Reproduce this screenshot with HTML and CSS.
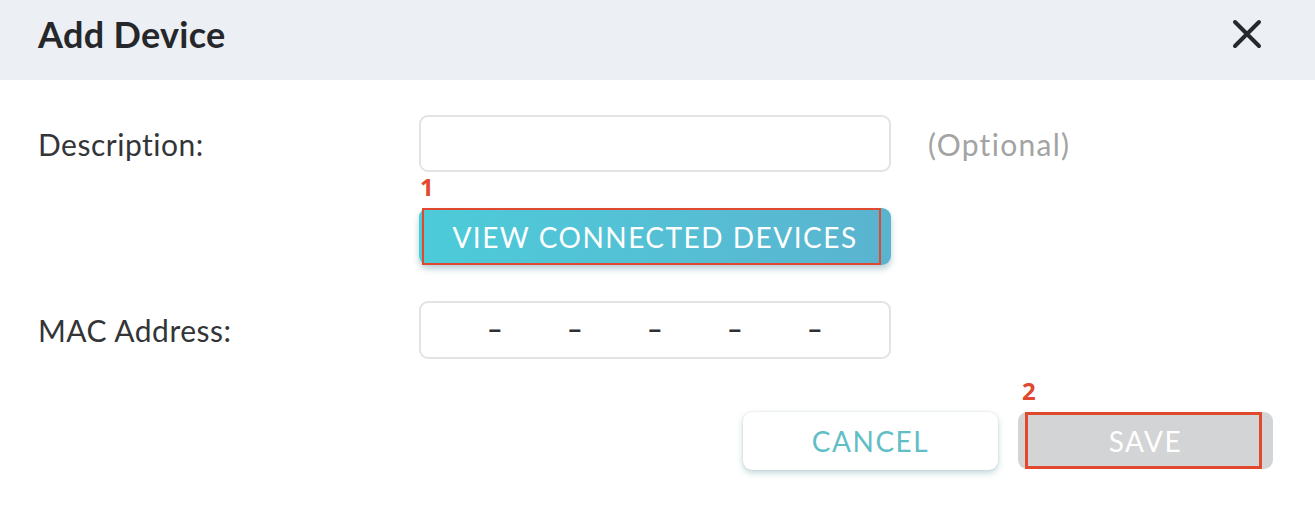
FILE: index.html
```html
<!DOCTYPE html>
<html lang="en">
<head>
<meta charset="utf-8">
<title>Add Device</title>
<link rel="stylesheet" href="styles.css">
</head>
<body>
<div class="dialog">
  <header class="dialog-header">
    <h1 class="dialog-title">Add Device</h1>
    <button class="close-btn" aria-label="Close">
      <svg width="30" height="30" viewBox="0 0 30 30"><path d="M3 3 L27 27 M27 3 L3 27" stroke="#26282b" stroke-width="4" stroke-linecap="round" fill="none"/></svg>
    </button>
  </header>
  <main class="dialog-body">
    <div class="form-grid">
      <label class="field-label">Description:</label>
      <div class="text-input"></div>
      <span class="hint">(Optional)</span>

      <div></div>
      <div class="annotated">
        <span class="mark mark-1">1</span>
        <button class="btn btn-primary">VIEW CONNECTED DEVICES</button>
        <span class="outline outline-1"></span>
      </div>
      <div></div>

      <label class="field-label">MAC Address:</label>
      <div class="text-input mac-input">
        <span>–</span><span>–</span><span>–</span><span>–</span><span>–</span>
      </div>
      <div></div>
    </div>
    <div class="dialog-footer">
      <button class="btn btn-cancel">CANCEL</button>
      <div class="annotated">
        <span class="mark mark-2">2</span>
        <button class="btn btn-save">SAVE</button>
        <span class="outline outline-2"></span>
      </div>
    </div>
  </main>
</div>
</body>
</html>
```

FILE: styles.css
```css
* { box-sizing: border-box; }
html, body { margin: 0; padding: 0; background: #ffffff; }
body { font-family: Lato, "Noto Sans", sans-serif; color: #333538; }

.dialog { width: 1315px; height: 531px; overflow: hidden; }

.dialog-header {
  height: 80px;
  background: #eceff3;
  display: flex;
  align-items: center;
  justify-content: space-between;
  padding: 0 53px 13px 38px;
}
.dialog-title {
  margin: 0;
  font-size: 36px;
  font-weight: 700;
  color: #25272a;
  letter-spacing: 0.3px;
}
.close-btn {
  border: 0;
  background: none;
  padding: 0;
  width: 30px;
  height: 30px;
  display: flex;
}

.dialog-body { padding: 35px 42px 0 38px; }

.form-grid {
  display: grid;
  grid-template-columns: 381px 472px auto;
  row-gap: 36px;
  align-items: center;
}
.field-label {
  font-size: 30px;
  color: #333538;
  letter-spacing: 0.5px;
}
.text-input {
  height: 57px;
  border: 2px solid #e3e3e3;
  border-radius: 9px;
  background: #fff;
}
.hint {
  margin-left: 37px;
  font-size: 30px;
  color: #a3a3a3;
  letter-spacing: 1.3px;
}
.mac-input {
  height: 58px;
  display: flex;
  align-items: center;
  padding-left: 66px;
  padding-bottom: 3px;
  font-size: 27px;
  font-weight: 900;
  color: #2e3033;
}
.mac-input span { width: 80px; }

.annotated { position: relative; }
.mark {
  position: absolute;
  font-family: "Open Sans", "Noto Sans", sans-serif;
  font-weight: 700;
  font-size: 24px;
  line-height: 1;
  color: #e0492e;
}
.mark-1 { left: 1px; top: -33px; }
.mark-2 { left: 4px; top: -33px; }
.outline {
  position: absolute;
  border: 2px solid #e0492e;
  pointer-events: none;
}
.outline-1 { left: 3px; right: 10px; top: 0; bottom: 0; }
.outline-2 { left: 7px; right: 11px; top: 0; bottom: 1px; border-width: 3px; }

.btn {
  display: block;
  border: 0;
  font-family: Lato, "Noto Sans", sans-serif;
  font-size: 28px;
  letter-spacing: 1.5px;
  border-radius: 9px;
  cursor: pointer;
}
.btn-primary {
  width: 472px;
  height: 57px;
  color: #ffffff;
  background: linear-gradient(90deg, #4ccbd9 0%, #56bed4 60%, #5ab3cf 100%);
  box-shadow: 0 4px 6px rgba(60, 120, 140, 0.35);
}

.dialog-footer {
  margin-top: 53px;
  display: flex;
  justify-content: flex-end;
  gap: 20px;
}
.btn-cancel {
  width: 255px;
  height: 58px;
  background: #fff;
  color: #5fbec6;
  box-shadow: 0 3px 6px rgba(80, 140, 150, 0.35), 0 0 2px rgba(0,0,0,0.12);
}
.btn-save {
  width: 255px;
  height: 57px;
  background: #d3d4d6;
  color: #ffffff;
}
```
